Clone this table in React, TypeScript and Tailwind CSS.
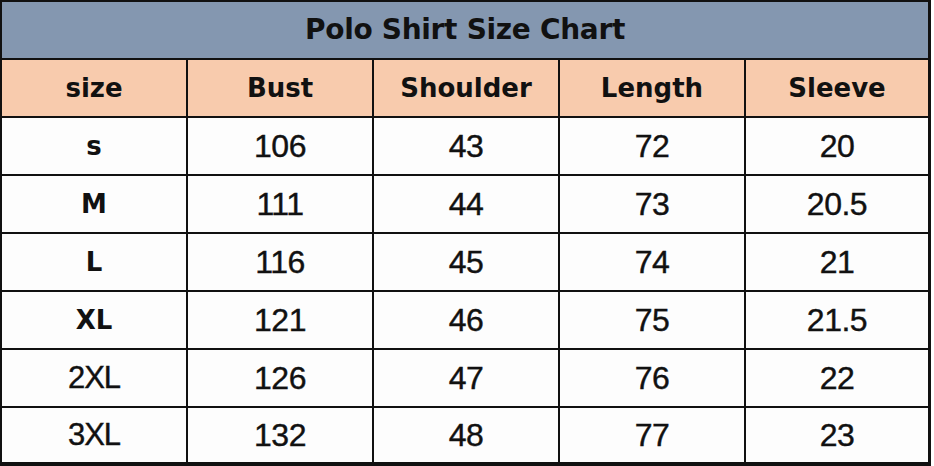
const headers = ["size", "Bust", "Shoulder", "Length", "Sleeve"];

const rows: { size: string; bold: boolean; values: string[] }[] = [
  { size: "s", bold: true, values: ["106", "43", "72", "20"] },
  { size: "M", bold: true, values: ["111", "44", "73", "20.5"] },
  { size: "L", bold: true, values: ["116", "45", "74", "21"] },
  { size: "XL", bold: true, values: ["121", "46", "75", "21.5"] },
  { size: "2XL", bold: false, values: ["126", "47", "76", "22"] },
  { size: "3XL", bold: false, values: ["132", "48", "77", "23"] },
];

const cols = "grid grid-cols-[184px_184px_184px_184px_1fr] gap-x-[2px]";

export default function App() {
  return (
    <div className="w-[934px] h-[466px] bg-white">
      <div className="w-[931px] h-[466px] bg-[#111] pt-[2px] pl-[2px] pr-[3px] pb-[4px] flex flex-col gap-y-[2px]">
        <div className="h-[56px] bg-[#8497b0] flex items-center justify-center font-['DejaVu_Sans',sans-serif] font-bold text-[28px] text-[#111] tracking-[-0.3px]">
          Polo Shirt Size Chart
        </div>
        <div className={`${cols} h-[56px]`}>
          {headers.map((h) => (
            <div
              key={h}
              className="bg-[#f8cbad] flex items-center justify-center font-['DejaVu_Sans',sans-serif] font-bold text-[26px] text-[#111]"
            >
              {h}
            </div>
          ))}
        </div>
        {rows.map((r, i) => (
          <div key={r.size} className={`${cols} ${i === rows.length - 1 ? "flex-1" : "h-[56px]"}`}>
            <div
              className={
                r.bold
                  ? "bg-[#fdfdfd] flex items-center justify-center font-['DejaVu_Sans',sans-serif] font-bold text-[26px] text-[#111]"
                  : "bg-[#fdfdfd] flex items-center justify-center font-['Liberation_Sans',Arial,sans-serif] text-[31px] tracking-[-1px] text-[#111] [-webkit-text-stroke:0.4px_#111]"
              }
            >
              {r.size}
            </div>
            {r.values.map((v, j) => (
              <div
                key={j}
                className="bg-[#fdfdfd] flex items-center justify-center font-['Liberation_Sans',Arial,sans-serif] text-[32px] tracking-[-0.5px] text-[#111] [-webkit-text-stroke:0.4px_#111]"
              >
                {v}
              </div>
            ))}
          </div>
        ))}
      </div>
    </div>
  );
}
